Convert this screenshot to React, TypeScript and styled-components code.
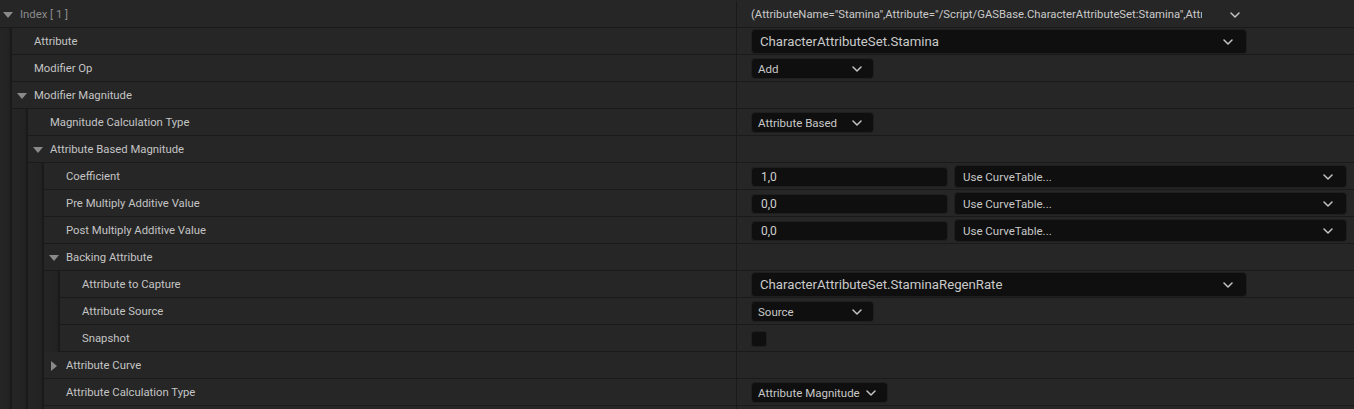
import React from "react";
import styled, { createGlobalStyle } from "styled-components";

const Global = createGlobalStyle`
  html, body { margin: 0; padding: 0; background: #262626; }
  body { font-family: Roboto, "Noto Sans", sans-serif; overflow: hidden; }
  * { box-sizing: border-box; }
`;

const Panel = styled.div`
  width: 1354px;
  height: 409px;
  overflow: hidden;
  background: #262626;
  padding-top: 1px;
  display: flex;
  flex-direction: column;
`;

const Row = styled.div`
  display: flex;
  height: 27px;
  flex: none;
  border-bottom: 1px solid #1a1a1a;
  background: #262626;
  padding-top: 1px;
`;

const NameCell = styled.div`
  width: 737px;
  flex: none;
  display: flex;
  align-items: stretch;
  border-right: 1px solid #1a1a1a;
  margin-top: -1px;
`;

const Gutter = styled.div<{ $first?: boolean }>`
  width: ${(p) => (p.$first ? 12 : 16)}px;
  flex: none;
  margin-bottom: -1px;
  background: linear-gradient(to right, #252525 0, #232323 calc(100% - 3px), #1c1c1c calc(100% - 2px), #191919 100%);
`;

const NameInner = styled.div<{ $root?: boolean }>`
  display: flex;
  align-items: center;
  padding-left: ${(p) => (p.$root ? 3 : 5)}px;
  padding-top: 1px;
  flex: 1;
  min-width: 0;
`;

const ArrowSlot = styled.div`
  width: 17px;
  flex: none;
  display: flex;
  align-items: center;
`;

const Label = styled.span<{ $root?: boolean }>`
  font-size: 11.3px;
  color: ${(p) => (p.$root ? "#8c8c8c" : "#c4c4c4")};
  white-space: nowrap;
`;

const ValueCell = styled.div`
  flex: 1;
  display: flex;
  align-items: center;
  padding-left: 14px;
  gap: 6px;
  min-width: 0;
`;

const Chevron = () => (
  <svg width={10} height={6} viewBox="0 0 10 6" style={{ flex: "none" }}>
    <path d="M1 1 L5 5 L9 1" fill="none" stroke="#c4c4c4" strokeWidth="1.5" strokeLinecap="round" strokeLinejoin="round" />
  </svg>
);

const Triangle = ({ open }: { open: boolean }) =>
  open ? (
    <svg width="10" height="6" viewBox="0 0 10 6">
      <path d="M0 0 L10 0 L5 6 Z" fill="#8a8a8a" />
    </svg>
  ) : (
    <svg width="6" height="10" viewBox="0 0 6 10" style={{ marginLeft: 2 }}>
      <path d="M0 0 L6 5 L0 10 Z" fill="#8a8a8a" />
    </svg>
  );

const HeaderValue = styled.div`
  width: 496px;
  display: flex;
  align-items: center;
  justify-content: space-between;
  padding-right: 7px;
`;

const HeaderText = styled.span`
  font-size: 11.3px;
  color: #cacaca;
  white-space: nowrap;
  overflow: hidden;
  width: 451px;
  flex: none;
`;

const BigCombo = styled.div`
  width: 496px;
  height: 25px;
  background: #0f0f0f;
  border: 1px solid #1f1f1f;
  border-radius: 4px;
  display: flex;
  align-items: center;
  justify-content: space-between;
  padding: 0 13px 0 8px;
`;

const BigText = styled.span`
  font-size: 13.2px;
  color: #cacaca;
  white-space: nowrap;
`;

const SmallCombo = styled.div<{ $w?: number }>`
  ${(p) => (p.$w ? `width: ${p.$w}px;` : "")}
  height: 21px;
  background: #0f0f0f;
  border: 1px solid #1f1f1f;
  border-radius: 4px;
  display: flex;
  align-items: center;
  justify-content: space-between;
  gap: 6px;
  padding: 0 11px 0 6px;
`;

const SmallText = styled.span`
  font-size: 11.5px;
  color: #c8c8c8;
  white-space: nowrap;
`;

const NumberBox = styled.div`
  width: 197px;
  height: 20px;
  background: #0f0f0f;
  border: 1px solid #1f1f1f;
  border-radius: 4px;
  display: flex;
  align-items: center;
  padding-left: 9px;
`;

const NumText = styled.span`
  font-size: 12px;
  color: #d0d0d0;
`;

const CurveCombo = styled.div`
  width: 393px;
  height: 23px;
  background: #0f0f0f;
  border: 1px solid #1f1f1f;
  border-radius: 4px;
  display: flex;
  align-items: center;
  justify-content: space-between;
  padding: 0 13px 0 8px;
`;

const CheckBox = styled.div`
  width: 16px;
  height: 16px;
  background: #0f0f0f;
  border: 1px solid #1f1f1f;
  border-radius: 3px;
`;

type Value =
  | { kind: "none" }
  | { kind: "header"; text: string }
  | { kind: "big"; text: string }
  | { kind: "small"; text: string; w?: number }
  | { kind: "num"; text: string }
  | { kind: "check" };

type RowData = { label: string; depth: number; arrow?: "open" | "closed"; value: Value };

const rows: RowData[] = [
  {
    label: "Index [ 1 ]",
    depth: 0,
    arrow: "open",
    value: {
      kind: "header",
      text: '(AttributeName="Stamina",Attribute="/Script/GASBase.CharacterAttributeSet:Stamina",AttributeOwner="/Script/GASBase.CharacterAttributeSet")',
    },
  },
  { label: "Attribute", depth: 1, value: { kind: "big", text: "CharacterAttributeSet.Stamina" } },
  { label: "Modifier Op", depth: 1, value: { kind: "small", text: "Add", w: 123 } },
  { label: "Modifier Magnitude", depth: 1, arrow: "open", value: { kind: "none" } },
  { label: "Magnitude Calculation Type", depth: 2, value: { kind: "small", text: "Attribute Based", w: 123 } },
  { label: "Attribute Based Magnitude", depth: 2, arrow: "open", value: { kind: "none" } },
  { label: "Coefficient", depth: 3, value: { kind: "num", text: "1,0" } },
  { label: "Pre Multiply Additive Value", depth: 3, value: { kind: "num", text: "0,0" } },
  { label: "Post Multiply Additive Value", depth: 3, value: { kind: "num", text: "0,0" } },
  { label: "Backing Attribute", depth: 3, arrow: "open", value: { kind: "none" } },
  { label: "Attribute to Capture", depth: 4, value: { kind: "big", text: "CharacterAttributeSet.StaminaRegenRate" } },
  { label: "Attribute Source", depth: 4, value: { kind: "small", text: "Source", w: 123 } },
  { label: "Snapshot", depth: 4, value: { kind: "check" } },
  { label: "Attribute Curve", depth: 3, arrow: "closed", value: { kind: "none" } },
  { label: "Attribute Calculation Type", depth: 3, value: { kind: "small", text: "Attribute Magnitude" } },
  { label: "Final Channel", depth: 3, value: { kind: "small", text: "Channel0", w: 67 } },
];

const renderValue = (v: Value) => {
  switch (v.kind) {
    case "header":
      return (
        <HeaderValue>
          <HeaderText>{v.text}</HeaderText>
          <Chevron />
        </HeaderValue>
      );
    case "big":
      return (
        <BigCombo>
          <BigText>{v.text}</BigText>
          <Chevron />
        </BigCombo>
      );
    case "small":
      return (
        <SmallCombo $w={v.w}>
          <SmallText>{v.text}</SmallText>
          <Chevron />
        </SmallCombo>
      );
    case "num":
      return (
        <>
          <NumberBox>
            <NumText>{v.text}</NumText>
          </NumberBox>
          <CurveCombo>
            <SmallText>Use CurveTable...</SmallText>
            <Chevron />
          </CurveCombo>
        </>
      );
    case "check":
      return <CheckBox />;
    default:
      return null;
  }
};

export default function App() {
  return (
    <>
      <Global />
      <Panel>
        {rows.map((r, i) => (
          <Row key={i}>
            <NameCell>
              {Array.from({ length: r.depth }).map((_, g) => (
                <Gutter key={g} $first={g === 0} />
              ))}
              <NameInner $root={r.depth === 0}>
                <ArrowSlot>{r.arrow ? <Triangle open={r.arrow === "open"} /> : null}</ArrowSlot>
                <Label $root={r.depth === 0}>{r.label}</Label>
              </NameInner>
            </NameCell>
            <ValueCell>{renderValue(r.value)}</ValueCell>
          </Row>
        ))}
      </Panel>
    </>
  );
}
